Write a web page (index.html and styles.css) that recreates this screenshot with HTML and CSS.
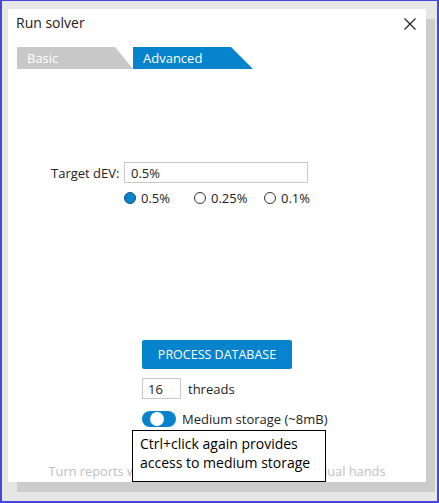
FILE: index.html
```html
<!DOCTYPE html>
<html lang="en">
<head>
  <meta charset="UTF-8" />
  <meta name="viewport" content="width=device-width, initial-scale=1.0" />
  <title>Run solver</title>
  <link rel="stylesheet" href="styles.css">
</head>
<body>
  <div class="screen">
    <div class="dialog">
      <div class="title-bar">
        <span class="title">Run solver</span>
        <svg class="close" width="12" height="12" viewBox="0 0 12 12">
          <path d="M0.5 0.5 L11.5 11.5 M11.5 0.5 L0.5 11.5" stroke="#222" stroke-width="1.2" fill="none"/>
        </svg>
      </div>

      <div class="tabs">
        <div class="tab tab-basic">Basic</div>
        <div class="tab tab-advanced">Advanced</div>
      </div>

      <div class="target-row">
        <label class="target-label">Target dEV:</label>
        <input type="text" class="target-input" value="0.5%">
      </div>
      <div class="radio-row">
        <div class="radio-item"><span class="radio checked"></span><span>0.5%</span></div>
        <div class="radio-item"><span class="radio"></span><span>0.25%</span></div>
        <div class="radio-item"><span class="radio"></span><span>0.1%</span></div>
      </div>

      <div class="actions">
        <button class="process-btn">PROCESS DATABASE</button>
        <div class="threads-row">
          <input type="text" class="threads-input" value="16">
          <span>threads</span>
        </div>
        <div class="storage-row">
          <span class="toggle"><span class="knob"></span></span>
          <span>Medium storage (~8mB)</span>
        </div>
      </div>

      <div class="footer-note">Turn reports with very many hands into individual hands</div>

      <div class="tooltip">Ctrl+click again provides<br>access to medium storage</div>
    </div>
  </div>
</body>
</html>
```

FILE: styles.css
```css
* {
  box-sizing: border-box;
}
body {
  margin: 0;
  font-family: 'Open Sans', 'Noto Sans', sans-serif;
  font-size: 13px;
  color: #222;
}
.screen {
  width: 439px;
  height: 503px;
  background: #e6e6e6;
  border: 2px solid #4646d8;
  border-top-width: 1px;
  padding: 8px 0 0 6px;
}
.dialog {
  position: relative;
  width: 418px;
  height: 473px;
  background: #fff;
  box-shadow: 9px 10px 0 #cccccc;
}
.title-bar {
  display: flex;
  justify-content: space-between;
  align-items: center;
  padding: 4px 10px 0 8px;
  height: 24px;
}
.title {
  font-size: 14px;
  line-height: 20px;
}
.close {
  margin-top: 2px;
}
.tabs {
  display: flex;
  margin: 14px 0 0 9px;
  height: 22px;
}
.tab {
  height: 22px;
  line-height: 22px;
  padding-left: 10px;
  color: #fff;
}
.tab-basic {
  width: 116px;
  background: #c8c8c8;
  clip-path: polygon(0 0, 98px 0, 100% 100%, 0 100%);
}
.tab-advanced {
  width: 120px;
  background: #0583cc;
  clip-path: polygon(0 0, 98px 0, 100% 100%, 0 100%);
}
.target-row {
  display: flex;
  align-items: center;
  margin: 93px 0 0 43px;
  height: 21px;
}
.target-label {
  width: 73px;
}
.target-input {
  width: 184px;
  height: 21px;
  border: 1px solid #c8c8c8;
  padding: 0 6px;
  font-family: inherit;
  font-size: 13px;
  color: #222;
}
.radio-row {
  display: flex;
  align-items: center;
  margin: 8px 0 0 116px;
  height: 14px;
}
.radio-item {
  display: flex;
  align-items: center;
  gap: 5px;
  width: 70px;
}
.radio {
  width: 12px;
  height: 12px;
  border: 1px solid #333;
  border-radius: 50%;
  background: #fff;
}
.radio.checked {
  background: #0583cc;
  border-color: #1a4d70;
}
.actions {
  display: flex;
  flex-direction: column;
  align-items: flex-start;
  margin: 135px 0 0 134px;
}
.process-btn {
  width: 150px;
  height: 29px;
  border: none;
  border-radius: 2px;
  background: #0583cc;
  color: #fff;
  font-family: inherit;
  font-size: 12.5px;
  padding: 0;
}
.threads-row {
  display: flex;
  align-items: center;
  gap: 7px;
  margin-top: 9px;
}
.threads-input {
  width: 39px;
  height: 21px;
  border: 1px solid #c8c8c8;
  padding: 0 5px;
  font-family: inherit;
  font-size: 13px;
  color: #222;
}
.storage-row {
  display: flex;
  align-items: center;
  gap: 6px;
  margin-top: 11px;
}
.toggle {
  position: relative;
  width: 34px;
  height: 16px;
  border-radius: 8px;
  background: #0583cc;
}
.knob {
  position: absolute;
  top: 1px;
  left: 8px;
  width: 14px;
  height: 14px;
  border-radius: 50%;
  background: #fff;
}
.footer-note {
  margin-top: 34px;
  text-align: center;
  font-size: 12.8px;
  color: #c0c0c0;
}
.tooltip {
  position: absolute;
  left: 124px;
  top: 421px;
  width: 194px;
  height: 52px;
  border: 1px solid #000;
  background: #fff;
  padding: 3px 7px;
  font-size: 14px;
  line-height: 19px;
  color: #000;
}
```
